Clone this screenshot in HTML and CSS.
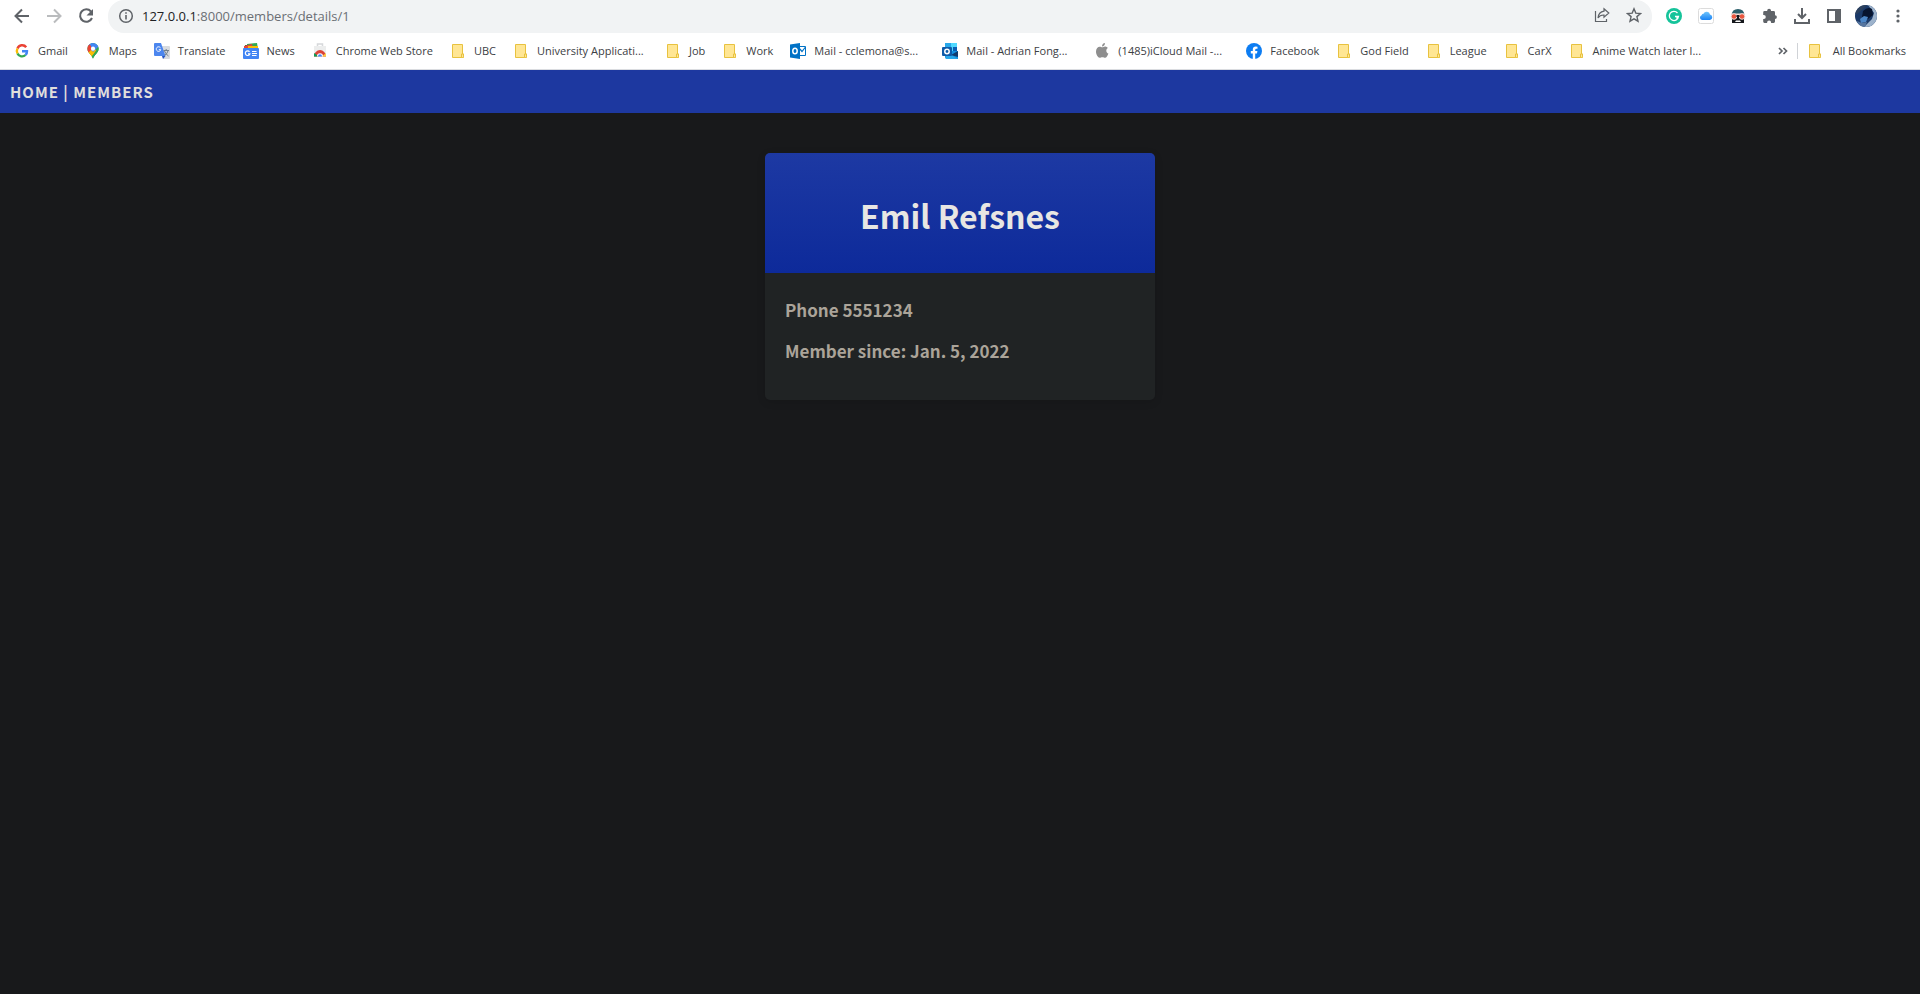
FILE: index.html
```html
<!DOCTYPE html>
<html lang="en">
<head>
<meta charset="utf-8">
<title>Details about Emil Refsnes</title>
<link rel="stylesheet" href="styles.css">
</head>
<body>
<svg class="defs" aria-hidden="true">
  <symbol id="folder" viewBox="0 0 16 16"><path d="M2.500 1.500h10v9.500h1v3.500h-11z" fill="#ffe694" stroke="#e8c23f"/><path d="M11.500 14.500v-3.500h2v2.500q0 1-1 1z" fill="#ffe694" stroke="#e8c23f"/></symbol>
</svg>
<header class="browser">
  <div class="toolbar">
    <button class="tool" aria-label="Back"><svg width="16" height="16" viewBox="0 0 16 16" fill="none" stroke="#5f6368" stroke-width="2"><path d="M15 8H2.500M8 1.500 1.500 8 8 14.500"/></svg></button>
    <button class="tool" aria-label="Forward"><svg width="16" height="16" viewBox="0 0 16 16" fill="none" stroke="#babcbe" stroke-width="2"><path d="M1 8h12.500M8 1.500 14.500 8 8 14.500"/></svg></button>
    <button class="tool" aria-label="Reload"><svg width="16" height="16" viewBox="0 0 16 16"><path d="M13 3.500A6.200 6.200 0 1 0 14 10" fill="none" stroke="#5f6368" stroke-width="2"/><path d="M15 1v6.500H8.500z" fill="#5f6368"/></svg></button>
    <div class="omnibox">
      <svg width="16" height="16" viewBox="0 0 16 16"><circle cx="8" cy="8" r="6.300" fill="none" stroke="#5f6368" stroke-width="1.500"/><path d="M7.200 7h1.600v4.500H7.200zM7.200 4.200h1.600v1.600H7.200z" fill="#5f6368"/></svg>
      <span class="url">127.0.0.1<span class="path">:8000/members/details/1</span></span>
      <button class="tool" aria-label="Share"><svg width="16" height="16" viewBox="0 0 16 16" fill="none" stroke="#5f6368" stroke-width="1.200"><path d="M1.500 4v10.500h11V12"/><path d="M10 1.800 14.800 6 10 10.200V8Q6 7.800 4 11 4.500 5 10 4.200z"/></svg></button>
      <button class="tool" aria-label="Bookmark this tab"><svg width="16" height="16" viewBox="0 0 16 16"><path d="m8 1.800 1.800 4.300 4.700.4-3.600 3.100 1.100 4.600L8 11.800l-4 2.400 1.100-4.600-3.600-3.100 4.700-.4z" fill="none" stroke="#5f6368" stroke-width="1.400"/></svg></button>
    </div>
    <div class="actions">
      <button class="tool" aria-label="Grammarly"><svg width="16" height="16" viewBox="0 0 16 16"><circle cx="8" cy="8" r="8" fill="#15c39a"/><path d="M11.500 5A4.600 4.600 0 1 0 12.500 8.500H9M11 8.500v2.700" fill="none" stroke="#fff" stroke-width="1.300"/></svg></button>
      <button class="tool" aria-label="iCloud"><svg width="16" height="16" viewBox="0 0 16 16"><defs><linearGradient id="cl" x2="0" y2="1"><stop stop-color="#70c5fb"/><stop offset="1" stop-color="#1a83f5"/></linearGradient></defs><rect x=".5" y=".5" width="15" height="15" rx="2" fill="#fff" stroke="#dcdcdc"/><path d="M4 12a2.500 2.500 0 0 1-.4-4.800A2 2 0 0 1 5.500 5.800 3.400 3.400 0 0 1 12 6.500 2.800 2.800 0 0 1 12 12z" fill="url(#cl)"/></svg></button>
      <button class="tool" aria-label="Goggles extension"><svg width="16" height="16" viewBox="0 0 16 16"><path d="M1.500 7Q2 1 8 1t6.500 6z" fill="#2b5f6b"/><path d="M2 8h12v7H2z" fill="#15181c"/><path d="M6 12.500h4l1 1.500H5z" fill="#fff"/><path d="M1 5.500h14v2H1z" fill="#f4ddd6"/><g fill="#e8573f" stroke="#f4ddd6"><circle cx="4" cy="8.500" r="2.800"/><circle cx="12" cy="8.500" r="2.800"/></g><path d="M6.500 7h3v2h-3z" fill="#15181c"/></svg></button>
      <button class="tool" aria-label="Extensions"><svg width="16" height="16" viewBox="0 0 16 16"><path d="M13 7.200V4.400Q13 3 11.600 3H9V2.600a1.900 1.900 0 0 0-3.800 0V3H2.500Q1.200 3 1.200 4.400V7h.6a2 2 0 0 1 0 4h-.6v2.600Q1.200 15 2.500 15h2.600v-.6a2 2 0 0 1 4 0v.6h2.500Q13 15 13 13.600V11a1.900 1.900 0 0 0 0-3.800z" fill="#5f6368"/></svg></button>
      <button class="tool" aria-label="Downloads"><svg width="16" height="16" viewBox="0 0 16 16" fill="none" stroke="#5f6368" stroke-width="2"><path d="M8 0v10M4 6l4 4 4-4M1 11v4h14v-4"/></svg></button>
      <button class="tool" aria-label="Side panel"><svg width="16" height="16" viewBox="0 0 16 16"><path d="M1 1h14v14H1zM3 3v10h6V3z" fill="#5f6368" fill-rule="evenodd"/></svg></button>
      <button class="tool profile" aria-label="Profile"><svg width="22" height="22" viewBox="0 0 22 22"><defs><clipPath id="av"><circle cx="11" cy="11" r="11"/></clipPath></defs><g clip-path="url(#av)"><path d="M0 0h22v22H0z" fill="#1b3a69"/><path d="M13 0h9v22H9l8-8 2-6z" fill="#9db3cc"/><path d="M0 0h12L7 5 2 9H0z" fill="#2c415e"/><path d="M8 6q5-5 9-2l1 6-5 4-6-2z" fill="#07142f"/><path d="m5 14 4-3 4 1-2 5-5 1z" fill="#4c86c6"/><path d="m2 16 5 2 5-1-2 5H4z" fill="#55759f"/></g></svg></button>
      <button class="tool" aria-label="Menu"><svg width="16" height="16" viewBox="0 0 16 16" fill="#5f6368"><circle cx="8" cy="3" r="1.600"/><circle cx="8" cy="8" r="1.600"/><circle cx="8" cy="13" r="1.600"/></svg></button>
    </div>
  </div>
  <nav class="bookmarks" aria-label="Bookmarks">
    <a href="#"><svg viewBox="0 0 16 16"><g fill="none" stroke-width="2.400"><path d="M12.200 4.200A5 5 0 0 0 3.500 5.500" stroke="#ea4335"/><path d="M3.500 5.500a5 5 0 0 0 0 5" stroke="#fbbc05"/><path d="M3.500 10.500a5 5 0 0 0 8 1.500" stroke="#34a853"/><path d="M11.500 12A5 5 0 0 0 13 8.200H8" stroke="#4285f4"/></g></svg><span>Gmail</span></a>
    <a href="#"><svg viewBox="0 0 16 16"><defs><clipPath id="pin"><path d="M8 0a5.600 5.600 0 0 1 5.600 5.700C13.600 10 9.500 11 8 16 6.500 11 2.400 10 2.400 5.700A5.600 5.600 0 0 1 8 0z"/></clipPath></defs><g clip-path="url(#pin)"><path d="M0 0h16v16H0z" fill="#34a853"/><path d="m0 12 8-8 4 4-7 7z" fill="#fbbc04"/><path d="M0 0h16L7 8z" fill="#4285f4"/><path d="m0 0 4 1 4 4-6 6z" fill="#ea4335"/><path d="m6 0 8 3-6 6-2-4z" fill="#4285f4"/><path d="m14 3 2 12H6z" fill="#34a853"/><circle cx="8" cy="5.700" r="2.100" fill="#fff"/></g></svg><span>Maps</span></a>
    <a href="#"><svg viewBox="0 0 16 16"><path d="M6 3h9q1 0 1 1v11q0 1-1 1H9z" fill="#d8dbdf"/><path d="M1 0h6l4.500 13H1q-1 0-1-1V1q0-1 1-1z" fill="#4c86ee"/><path d="M8 13h3.500L9 16z" fill="#2455c3"/><path d="M6.500 4.800a2.300 2.300 0 1 0 .3 1.900h-2" fill="none" stroke="#fff"/><path d="M9.500 7.500H15M12.200 6v1.500m2 0q-1 3.500-3.700 5M10.500 8q1 3 4 5" fill="none" stroke="#71808c"/></svg><span>Translate</span></a>
    <a href="#"><svg viewBox="0 0 16 16"><path d="M2 2h9v4H2z" fill="#188038"/><path d="m4 1 10-1 1 6H4z" fill="#34a853"/><path d="m1 3 8-2 1 5H1z" fill="#ea4335"/><path d="M5 3h10v3H5z" fill="#fbbc04"/><rect y="5" width="16" height="11" rx="1" fill="#4285f4"/><path d="M6.500 8.800a2.300 2.300 0 1 0 .4 2H5M9 8.500h4.500M9 10.500h5M9 12.500h4.500" fill="none" stroke="#fff" stroke-width="1.200"/></svg><span>News</span></a>
    <a href="#"><svg viewBox="0 0 16 16"><path d="M5.500 4V1h5v3" fill="none" stroke="#d6d8da" stroke-width="1.500"/><path d="M2 3h12v11H2z" fill="#eceded"/><path d="M2 13.500a6 6.500 0 0 1 12 0z" fill="#db4437"/><path d="m2 10 5 3.500H2z" fill="#0f9d58"/><path d="m14 10-4 3.500h4z" fill="#ffcd40"/><path d="M5 13.500a3 3.300 0 0 1 6 0z" fill="#fff"/><path d="M6 13.500a2 2.200 0 0 1 4 0z" fill="#4285f4"/></svg><span>Chrome Web Store</span></a>
    <a href="#"><svg><use href="#folder"/></svg><span>UBC</span></a>
    <a class="long" href="#"><svg><use href="#folder"/></svg><span>University Applicati...</span></a>
    <a href="#"><svg><use href="#folder"/></svg><span>Job</span></a>
    <a href="#"><svg><use href="#folder"/></svg><span>Work</span></a>
    <a class="long" href="#"><svg viewBox="0 0 16 16"><path d="M9 3.500h6.500v9H9z" fill="#fff" stroke="#0072c6"/><path d="m9 5 3 3.500L15.500 4" fill="none" stroke="#0072c6" stroke-width="1.200"/><path d="m0 1.500 10-1.500v16L0 14.500z" fill="#0072c6"/><ellipse cx="5" cy="8" rx="2.200" ry="2.800" fill="none" stroke="#fff" stroke-width="1.500"/></svg><span>Mail - cclemona@s...</span></a>
    <a class="long" href="#"><svg viewBox="0 0 16 16"><path d="M3 0h12v9H3z" fill="#0a5fb4"/><path d="M3 0h12v4H3z" fill="#28a8ea"/><path d="M9 0h6v4H9zM7 4h4v4H7z" fill="#50d9ff"/><path d="M3 8h13v8H5q-2 0-2-2z" fill="#1490df"/><path d="m3 8 13 8H4z" fill="#28a8ea"/><path d="M16 8v6l-7-2z" fill="#123b6d"/><rect y="4" width="10" height="9" rx="1" fill="#0f5ba8"/><circle cx="5" cy="8.500" r="2.200" fill="none" stroke="#fff" stroke-width="1.500"/></svg><span>Mail - Adrian Fong...</span></a>
    <a class="long" href="#"><svg viewBox="0 0 16 16" fill="#8e8e8e"><path d="M8.200 4.300C9 4.300 10 3.400 11.300 3.500q1.700.1 2.600 1.400c-2.300 1.400-2 4.600.5 5.600-.7 2-2 4.300-3.300 4.300-1 0-1.400-.6-2.700-.6s-1.800.6-2.700.6C4 14.800 2 11.600 2 8.600 2 5.500 3.900 3.700 5.700 3.700c1 0 1.800.6 2.500.6z"/><path d="M8 3.500C7.900 1.600 9.300.2 10.900 0 11.100 2 9.500 3.500 8 3.500z"/></svg><span>(1485)iCloud Mail -...</span></a>
    <a href="#"><svg viewBox="0 0 16 16"><circle cx="8" cy="8" r="8" fill="#0d7df2"/><path d="M6.800 16v-5.500h-2V8h2V6.500q0-3 3-3 1 0 1.700.2v2h-1q-1.300 0-1.300 1.300v1h2.200l-.4 2.500H9.200V16z" fill="#fff"/></svg><span>Facebook</span></a>
    <a href="#"><svg><use href="#folder"/></svg><span>God Field</span></a>
    <a href="#"><svg><use href="#folder"/></svg><span>League</span></a>
    <a href="#"><svg><use href="#folder"/></svg><span>CarX</span></a>
    <a class="long" href="#"><svg><use href="#folder"/></svg><span>Anime Watch later l...</span></a>
    <button class="tool more" aria-label="More bookmarks"><svg viewBox="0 0 16 16" fill="none" stroke="#5f6368" stroke-width="1.700"><path d="m4 5 3 3-3 3M8.500 5l3 3-3 3"/></svg></button>
    <a class="all" href="#"><svg><use href="#folder"/></svg><span>All Bookmarks</span></a>
  </nav>
</header>
<nav class="topnav"><a href="#">HOME</a> | <a href="#">MEMBERS</a></nav>
<main class="card">
  <h1>Emil Refsnes</h1>
  <div class="details">
    <p>Phone 5551234</p>
    <p>Member since: Jan. 5, 2022</p>
  </div>
</main>
</body>
</html>
```
FILE: styles.css
```css
* { box-sizing: border-box; }
body {
  margin: 0;
  min-height: 100vh;
  background: #18191b;
  font-family: "Noto Sans CJK JP", "Noto Sans", sans-serif;
  font-weight: 600;
}
a { color: inherit; text-decoration: none; }
svg { display: block; flex: none; }
.defs { position: absolute; width: 0; height: 0; }

.browser {
  background: #fff;
  border-bottom: 1px solid #dadce0;
  font-family: "Open Sans", "Noto Sans", sans-serif;
  font-weight: 400;
}
.toolbar { display: flex; align-items: center; height: 33px; padding: 0 6px; }
.tool {
  display: flex;
  align-items: center;
  justify-content: center;
  flex: none;
  width: 32px;
  height: 32px;
  padding: 0 0 2px;
  border: 0;
  background: none;
}
.omnibox {
  display: flex;
  align-items: center;
  flex: 1;
  height: 33px;
  margin-left: 6px;
  padding: 0 2px 1px 10px;
  border-radius: 16px;
  background: #f1f3f4;
}
.url { flex: 1; padding: 0 0 1px 8px; font-size: 13px; color: #202124; }
.path { color: #6b6f74; }
.actions { display: flex; align-items: center; padding-left: 6px; }

.bookmarks {
  display: flex;
  align-items: center;
  gap: 1px;
  height: 36px;
  padding: 0 6px;
  font-size: 11px;
  color: #3c4043;
}
.bookmarks a { display: flex; align-items: center; gap: 8px; padding: 0 8px; white-space: nowrap; }
.bookmarks span { padding-bottom: 2px; }
.bookmarks .long { width: 151px; }
.bookmarks .all { gap: 10px; }
.bookmarks svg { width: 16px; height: 16px; }
.bookmarks .more { margin-left: auto; width: 28px; height: 16px; padding: 0; border-right: 1px solid #d0d3d7; }

.topnav {
  padding: 8px 10px;
  background: #1d38a0;
  color: #e0dfdc;
  font-size: 15px;
  line-height: 27px;
  letter-spacing: 1px;
}
.card {
  width: 390px;
  max-width: 100%;
  margin: 40px auto;
  border-radius: 5px;
  overflow: hidden;
  background: #202324;
  color: #aba499;
  box-shadow: 0 2px 8px rgba(0, 0, 0, 0.12);
}
h1 {
  margin: 0;
  padding: 38px 20px 34px;
  background: linear-gradient(#1d39a3, #0d2a9a);
  color: #e8e6e3;
  font-size: 32px;
  font-weight: 600;
  line-height: 48px;
  text-align: center;
}
.details { padding: 24px 20px 37px; font-size: 17px; line-height: 25px; }
.details p { margin: 0; }
.details p + p { margin-top: 16px; }
```
